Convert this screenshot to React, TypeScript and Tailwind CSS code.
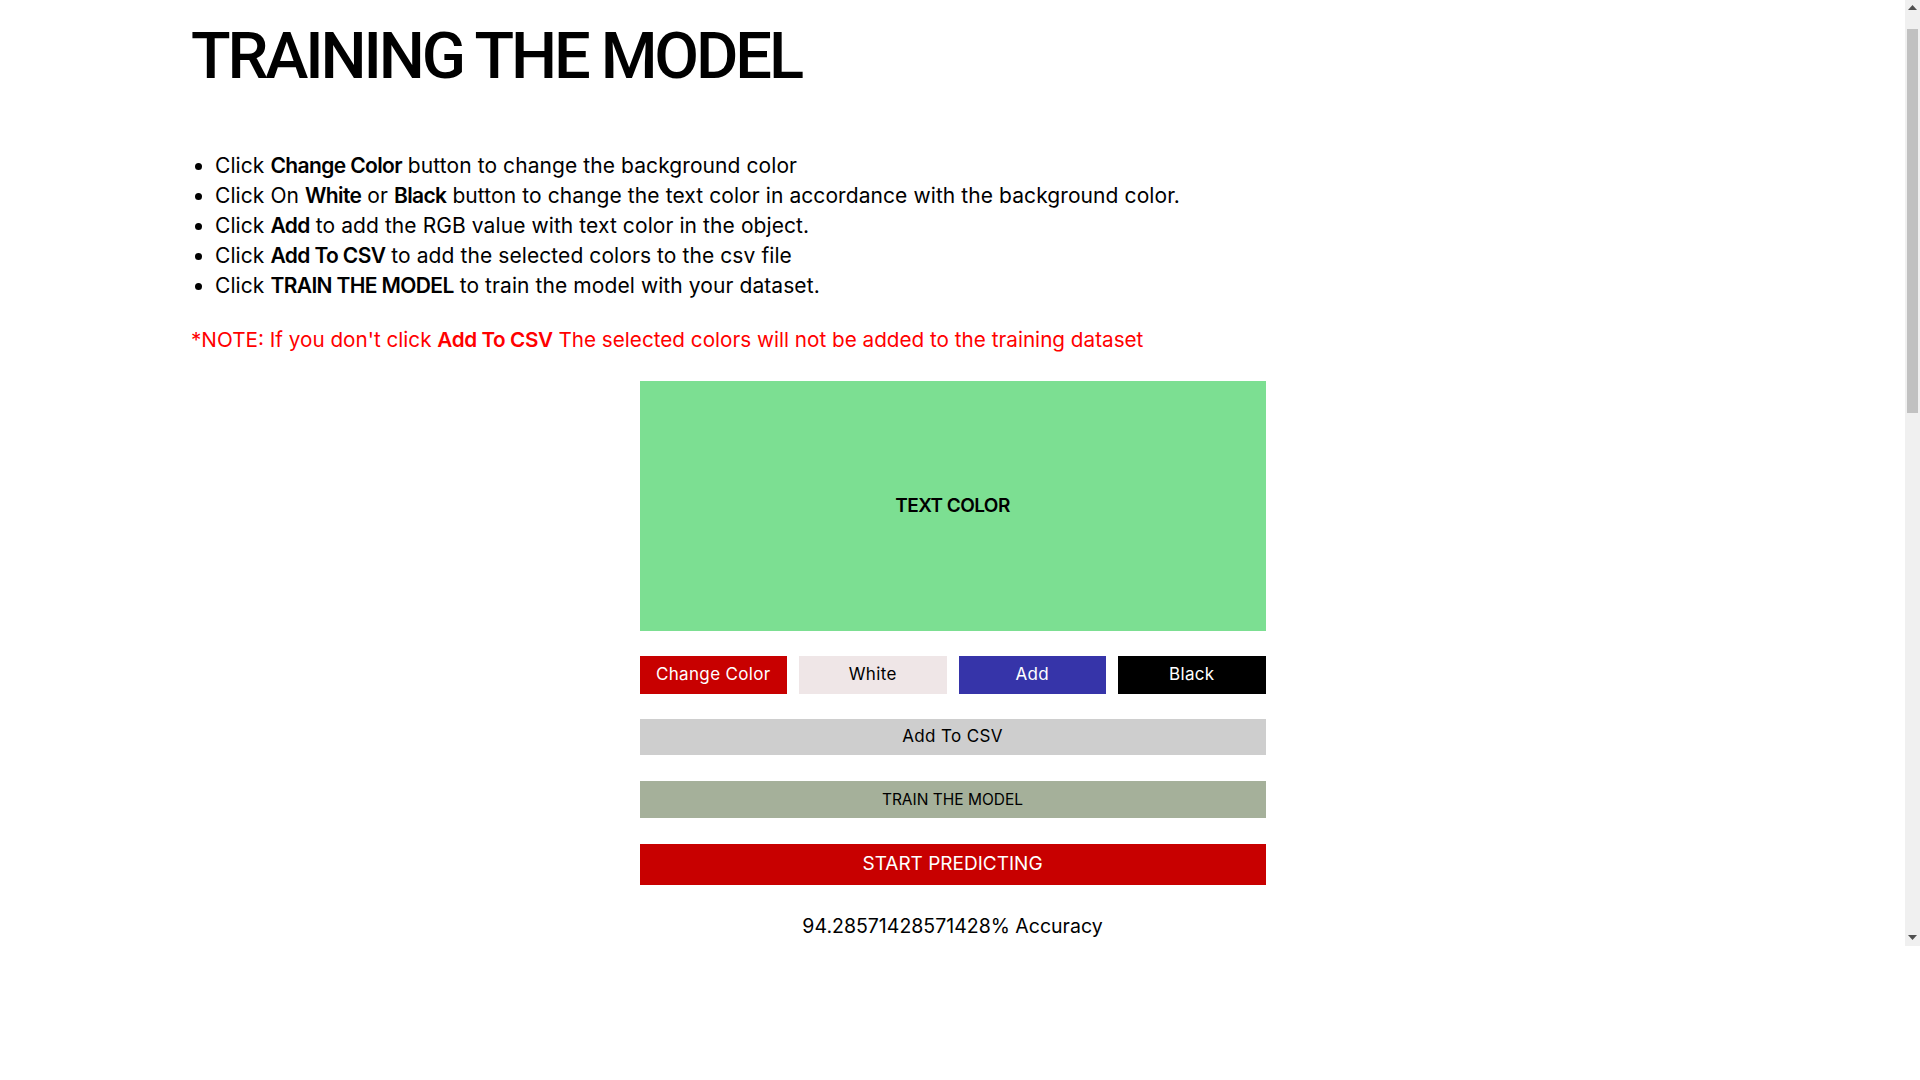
import React from "react";

const steps: { pre: string; bold: string; mid?: string; bold2?: string; post: string }[] = [
  { pre: "Click ", bold: "Change Color", post: " button to change the background color" },
  { pre: "Click On ", bold: "White", mid: " or ", bold2: "Black", post: " button to change the text color in accordance with the background color." },
  { pre: "Click ", bold: "Add", post: " to add the RGB value with text color in the object." },
  { pre: "Click ", bold: "Add To CSV", post: " to add the selected colors to the csv file" },
  { pre: "Click ", bold: "TRAIN THE MODEL", post: " to train the model with your dataset." },
];

const FakeScrollbar = () => (
  <div className="absolute right-0 top-0 flex h-[946px] w-[15px] flex-col items-center bg-[#f0f0f0]">
    <svg width="9" height="6" viewBox="0 0 9 6" className="mt-[5px]">
      <path d="M4.5 0 L9 5 L0 5 Z" fill="#505050" />
    </svg>
    <div className="mt-[18px] h-[384px] w-[11px] bg-[#c1c1c1]" />
    <div className="flex-1" />
    <svg width="9" height="6" viewBox="0 0 9 6" className="mb-[5px]">
      <path d="M0 0 L9 0 L4.5 5 Z" fill="#505050" />
    </svg>
  </div>
);

const App = () => {
  return (
    <div className="relative h-[1080px] w-full overflow-hidden bg-white font-['Inter',sans-serif] text-black">
      <div className="w-[1905px] px-[191px]">
        <h1 className="mt-[16px] font-['Roboto',sans-serif] text-[65px] font-medium leading-[80px] tracking-[-0.048em]">
          TRAINING THE MODEL
        </h1>

        <ul className="mt-[55px] list-disc pl-[24px] text-[21px] leading-[30px] tracking-[0.004em]">
          {steps.map((s, i) => (
            <li key={i}>
              {s.pre}
              <b className="font-semibold tracking-[-0.03em]">{s.bold}</b>
              {s.mid}
              {s.bold2 && <b className="font-semibold tracking-[-0.03em]">{s.bold2}</b>}
              {s.post}
            </li>
          ))}
        </ul>

        <p className="mt-[24px] text-[20.7px] leading-[30px] text-[#ff0000]">
          *NOTE: If you don't click <b className="font-semibold tracking-[-0.02em]">Add To CSV</b> The selected colors will not be added to the training dataset
        </p>

        <div className="mx-auto mt-[26px] w-[626px]">
          <div className="flex h-[250px] items-center justify-center bg-[#7cdf92]">
            <span className="text-[19px] font-semibold tracking-[-0.03em]">TEXT COLOR</span>
          </div>

          <div className="mt-[25px] grid grid-cols-4 gap-[12px] text-[17px] tracking-[0.02em]">
            <button className="h-[38px] bg-[#c80000] text-white">Change Color</button>
            <button className="h-[38px] bg-[#efe6e7] text-black">White</button>
            <button className="h-[38px] bg-[#3634a9] text-white">Add</button>
            <button className="h-[38px] bg-black text-white">Black</button>
          </div>

          <button className="mt-[25px] block h-[36px] w-full bg-[#cecece] text-[17px] tracking-[0.02em]">Add To CSV</button>
          <button className="mt-[26px] block h-[37px] w-full bg-[#a5b09a] text-[15.5px]">TRAIN THE MODEL</button>
          <button className="mt-[26px] block h-[41px] w-full bg-[#c80000] text-[19px] text-white">START PREDICTING</button>

          <p className="mt-[26px] text-center text-[19.5px] leading-[30px]">94.28571428571428% Accuracy</p>
        </div>
      </div>

      <FakeScrollbar />
    </div>
  );
};

export default App;
